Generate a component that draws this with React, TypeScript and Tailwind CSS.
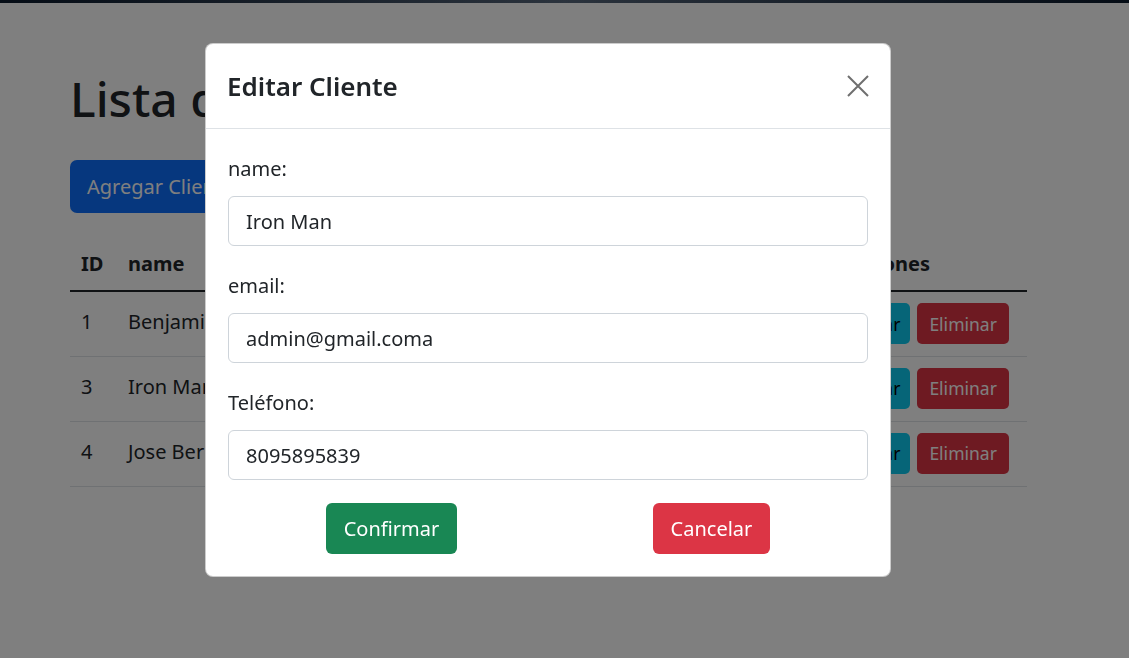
import { useState } from "react";

interface Cliente {
  id: number;
  name: string;
  email: string;
  telefono: string;
}

const clientes: Cliente[] = [
  { id: 1, name: "Benjamin Mendez", email: "benjamin@gmail.com", telefono: "8091234567" },
  { id: 3, name: "Iron Man", email: "admin@gmail.com", telefono: "8095895839" },
  { id: 4, name: "Jose Bernardo", email: "jose@gmail.com", telefono: "8297654321" },
];

const font = { fontFamily: '"Noto Sans", "Open Sans", sans-serif' };

export default function App() {
  return (
    <div className="relative min-h-[658px] bg-white text-[#212529]" style={font}>
      <div className="h-[3px] bg-gradient-to-r from-[#0b1a2c] via-[#56667a] to-[#0b1a2c]" />
      <ClientesPage />
      <div className="fixed inset-0 bg-black/50" />
      <EditarClienteModal />
    </div>
  );
}

function ClientesPage() {
  return (
    <div className="pl-[70px] pt-[66px]">
      <h1 className="text-[48px] leading-[60px] font-medium">Lista de Clientes</h1>
      <button className="mt-[31px] h-[53px] px-[17px] rounded-[7px] bg-[#0d6efd] text-white text-[20px]">
        Agregar Cliente
      </button>
      <table className="mt-[25px] w-[957px] text-[20px] border-collapse">
        <thead>
          <tr className="border-b-2 border-[#212529] text-left">
            <th className="w-[47px] h-[53px] px-[11px] font-bold">ID</th>
            <th className="w-[250px] px-[11px] font-bold">name</th>
            <th className="w-[270px] px-[11px] font-bold">email</th>
            <th className="w-[194px] px-[11px] font-bold">Teléfono</th>
            <th className="px-[11px] font-bold">Acciones</th>
          </tr>
        </thead>
        <tbody>
          {clientes.map((c) => (
            <tr key={c.id} className="h-[65px] border-b border-[#dee2e6]">
              <td className="px-[11px] pb-[4px]">{c.id}</td>
              <td className="px-[11px] pb-[4px]">{c.name}</td>
              <td className="px-[11px] pb-[4px]">{c.email}</td>
              <td className="px-[11px] pb-[4px]">{c.telefono}</td>
              <td className="px-[11px]">
                <div className="flex gap-[7px]">
                  <button className="h-[41px] px-[10px] rounded-[5px] bg-[#0dcaf0] text-black text-[17.5px]">
                    Editar
                  </button>
                  <button className="h-[41px] px-[12px] rounded-[5px] bg-[#dc3545] text-white text-[17.5px]">
                    Eliminar
                  </button>
                </div>
              </td>
            </tr>
          ))}
        </tbody>
      </table>
    </div>
  );
}

function EditarClienteModal() {
  const [name, setName] = useState("Iron Man");
  const [email, setEmail] = useState("admin@gmail.coma");
  const [telefono, setTelefono] = useState("8095895839");

  return (
    <div className="fixed left-[205px] top-[43px] w-[686px] bg-white rounded-[8px] border border-black/20">
      <div className="h-[85px] pl-[21px] pr-[23px] flex items-center justify-between border-b border-[#dee2e6]">
        <h5 className="text-[26px] font-semibold leading-none">Editar Cliente</h5>
        <button className="w-[22px] h-[22px] mr-[-2px] mt-[-1px]">
          <svg viewBox="0 0 22 22" width="22" height="22" fill="none" stroke="#6f6f6f" strokeWidth="2">
            <path d="M1 1L21 21M21 1L1 21" />
          </svg>
        </button>
      </div>
      <form className="px-[22px] pt-[25px] pb-[22px]" onSubmit={(e) => e.preventDefault()}>
        <Field label="name:" value={name} onChange={setName} />
        <Field label="email:" value={email} onChange={setEmail} />
        <Field label="Teléfono:" value={telefono} onChange={setTelefono} />
        <div className="flex justify-around mt-[-2px]">
          <button className="h-[51px] px-[18px] rounded-[6px] bg-[#198754] text-white text-[20px]">
            Confirmar
          </button>
          <button className="h-[51px] px-[18px] rounded-[6px] bg-[#dc3545] text-white text-[20px]">
            Cancelar
          </button>
        </div>
      </form>
    </div>
  );
}

interface FieldProps {
  label: string;
  value: string;
  onChange: (v: string) => void;
}

function Field({ label, value, onChange }: FieldProps) {
  return (
    <div className="mb-[25px]">
      <label className="block text-[20px] leading-[30px] mb-[12px]">{label}</label>
      <input
        className="block w-full h-[50px] px-[17px] rounded-[6px] border border-[#ced4da] text-[20px] text-[#212529] outline-none"
        type="text"
        value={value}
        onChange={(e: React.ChangeEvent<HTMLInputElement>) => onChange(e.target.value)}
      />
    </div>
  );
}
